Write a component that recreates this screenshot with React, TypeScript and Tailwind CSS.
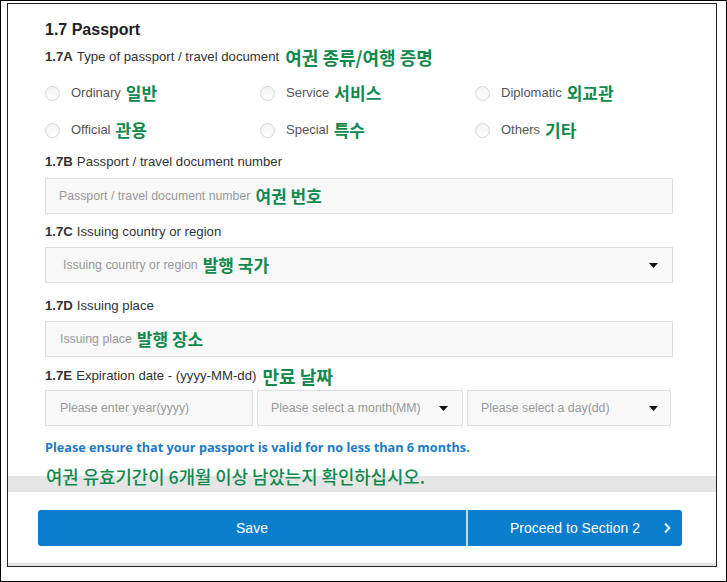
import React from "react";

const KO = "font-['Noto_Sans_CJK_KR',sans-serif] font-bold text-[#0f8a4d]";

function Radio({ label, ko }: { label: string; ko: string }) {
  return (
    <div className="flex items-center h-[24px]">
      <span className="w-[15px] h-[15px] rounded-full border border-[#d6d6d6] bg-[linear-gradient(to_bottom,#f3f3f3,#ffffff)] shrink-0" />
      <span className="ml-[11px] text-[13px] text-[#555]">{label}</span>
      <span className={`ml-[5px] text-[17px] leading-[22px] ${KO}`}>{ko}</span>
    </div>
  );
}

function Caret() {
  return (
    <svg width="9" height="5" viewBox="0 0 9 5" className="shrink-0">
      <path d="M0 0 L9 0 L4.5 5 Z" fill="#111" />
    </svg>
  );
}

function Label({ code, text, ko }: { code: string; text: string; ko?: string }) {
  return (
    <div className="flex items-center h-[18px] text-[13.2px] text-[#333] whitespace-nowrap">
      <span className="font-bold">{code}</span>
      <span className="ml-[4px]">{text}</span>
      {ko && <span className={`ml-[6px] text-[18px] leading-[18px] ${KO}`}>{ko}</span>}
    </div>
  );
}

export default function App() {
  return (
    <div className="w-[727px] h-[582px] bg-white border border-black pl-[6px] pt-[2px] font-['Liberation_Sans',Arial,sans-serif]">
      <div className="w-[710px] h-[564px] border border-[#222] bg-white flex flex-col">
        <div className="pl-[37px] pr-[42px] flex flex-col">
          <div className="mt-[16px] h-[20px] flex items-center text-[16px] font-bold text-[#222]">1.7 Passport</div>
          <div className="mt-[8px]">
            <Label code="1.7A" text="Type of passport / travel document" ko="여권 종류/여행 증명" />
          </div>
          <div className="mt-[15px] grid grid-cols-[215px_215px_198px] gap-y-[13px]">
            <Radio label="Ordinary" ko="일반" />
            <Radio label="Service" ko="서비스" />
            <Radio label="Diplomatic" ko="외교관" />
            <Radio label="Official" ko="관용" />
            <Radio label="Special" ko="특수" />
            <Radio label="Others" ko="기타" />
          </div>
          <div className="mt-[11px]">
            <Label code="1.7B" text="Passport / travel document number" />
          </div>
          <div className="mt-[7px] h-[36px] w-[628px] border border-[#dedede] bg-[#f8f8f8] flex items-center pl-[13px]">
            <span className="text-[12.3px] text-[#999]">Passport / travel document number</span>
            <span className={`ml-[5px] text-[17px] leading-[20px] ${KO}`}>여권 번호</span>
          </div>
          <div className="mt-[9px]">
            <Label code="1.7C" text="Issuing country or region" />
          </div>
          <div className="mt-[6px] h-[36px] w-[628px] border border-[#dedede] bg-[#f8f8f8] flex items-center pl-[17px] pr-[14px]">
            <span className="text-[12.3px] text-[#999]">Issuing country or region</span>
            <span className={`ml-[5px] text-[17px] leading-[20px] ${KO}`}>발행 국가</span>
            <span className="flex-1" />
            <Caret />
          </div>
          <div className="mt-[14px]">
            <Label code="1.7D" text="Issuing place" />
          </div>
          <div className="mt-[6px] h-[36px] w-[628px] border border-[#dedede] bg-[#f8f8f8] flex items-center pl-[14px]">
            <span className="text-[12.3px] text-[#999]">Issuing place</span>
            <span className={`ml-[5px] text-[17px] leading-[20px] ${KO}`}>발행 장소</span>
          </div>
          <div className="mt-[10px]">
            <Label code="1.7E" text="Expiration date - (yyyy-MM-dd)" ko="만료 날짜" />
          </div>
          <div className="mt-[5px] flex gap-[4px] h-[36px]">
            <div className="w-[208px] border border-[#dedede] bg-[#f8f8f8] flex items-center pl-[14px]">
              <span className="text-[12.3px] text-[#999]">Please enter year(yyyy)</span>
            </div>
            <div className="w-[206px] border border-[#dedede] bg-[#f8f8f8] flex items-center pl-[13px] pr-[14px]">
              <span className="text-[12.3px] text-[#999]">Please select a month(MM)</span>
              <span className="flex-1" />
              <Caret />
            </div>
            <div className="w-[204px] border border-[#dedede] bg-[#f8f8f8] flex items-center pl-[13px] pr-[12px]">
              <span className="text-[12.3px] text-[#999]">Please select a day(dd)</span>
              <span className="flex-1" />
              <Caret />
            </div>
          </div>
          <div className="mt-[13px] h-[18px] flex items-center font-['Open_Sans',sans-serif] font-bold text-[12.7px] text-[#1b7bc4] whitespace-nowrap">
            Please ensure that your passport is valid for no less than 6 months.
          </div>
        </div>
        <div className="mt-[7px] h-[28px] bg-[linear-gradient(to_bottom,#ffffff_12px,#e5e5e5_12px)] pl-[38px] pt-[1px]">
          <span className="font-['Noto_Sans_CJK_KR',sans-serif] font-medium text-[17.8px] leading-[23px] text-[#0f8a4d] whitespace-nowrap">
            여권 유효기간이 6개월 이상 남았는지 확인하십시오.
          </span>
        </div>
        <div className="mt-[18px] ml-[30px] w-[644px] h-[36px] flex">
          <button className="w-[428px] h-full bg-[#0a7dcc] rounded-l-[3px] text-white text-[14px]">Save</button>
          <div className="w-[2px] h-full bg-[#bcdcf2]" />
          <button className="relative w-[214px] h-full bg-[#0a7dcc] rounded-r-[3px] text-white text-[14px]">
            Proceed to Section 2
            <svg width="8" height="12" viewBox="0 0 8 12" className="absolute right-[11px] top-[12px]">
              <path d="M2 1.5 L6.2 6 L2 10.5" stroke="#fff" strokeWidth="2" fill="none" />
            </svg>
          </button>
        </div>
        <div className="flex-1" />
        <div className="h-[3px] bg-[#e3e3e3]" />
      </div>
    </div>
  );
}
